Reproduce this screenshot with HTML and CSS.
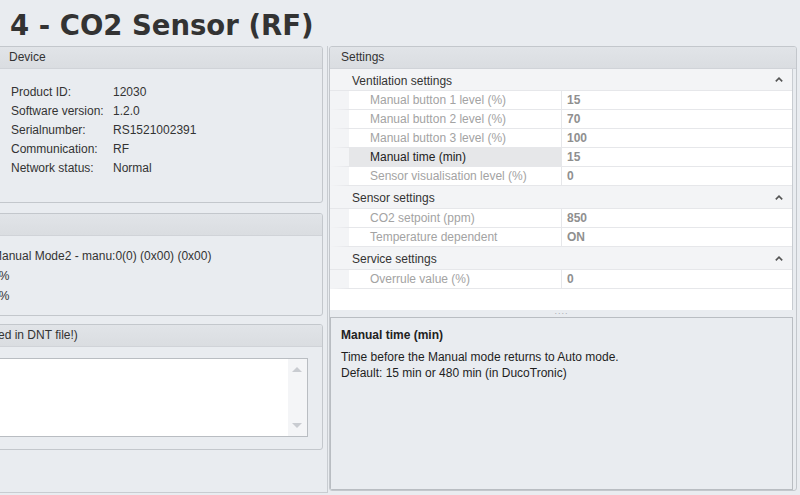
FILE: index.html
```html
<!DOCTYPE html>
<html>
<head>
<meta charset="utf-8">
<link rel="stylesheet" href="styles.css">
</head>
<body>
<div class="page">
  <h1 class="title">4 - CO2 Sensor (RF)</h1>
  <div class="main">
    <div class="left">
      <div class="group device">
        <div class="group-head">Device</div>
        <div class="device-body">
          <div class="kv"><span class="k">Product ID:</span><span>12030</span></div>
          <div class="kv"><span class="k">Software version:</span><span>1.2.0</span></div>
          <div class="kv"><span class="k">Serialnumber:</span><span>RS1521002391</span></div>
          <div class="kv"><span class="k">Communication:</span><span>RF</span></div>
          <div class="kv"><span class="k">Network status:</span><span>Normal</span></div>
        </div>
      </div>
      <div class="group status">
        <div class="group-head">&nbsp;</div>
        <div class="status-body">
          <div class="line">Manual Mode2 - manu:0(0) (0x00) (0x00)</div>
          <div class="line">0%</div>
          <div class="line">0%</div>
        </div>
      </div>
      <div class="group notes">
        <div class="group-head head-clip">(not stored in DNT file!)</div>
        <div class="notes-body">
          <div class="textbox">
            <div class="scroll">
              <span class="arr up"></span>
              <span class="arr down"></span>
            </div>
          </div>
        </div>
      </div>
    </div>
    <div class="right">
      <div class="group settings">
        <div class="group-head">Settings</div>
        <div class="settings-body">
          <div class="grid">
            <div class="cat first"><span>Ventilation settings</span><svg class="chev" width="8" height="5" viewBox="0 0 8 5"><polyline points="0.8,4.4 4,1.2 7.2,4.4" fill="none" stroke="#555" stroke-width="1.6"/></svg></div>
            <div class="row"><span class="lbl">Manual button 1 level (%)</span><span class="val">15</span></div>
            <div class="row"><span class="lbl">Manual button 2 level (%)</span><span class="val">70</span></div>
            <div class="row"><span class="lbl">Manual button 3 level (%)</span><span class="val">100</span></div>
            <div class="row sel"><span class="lbl">Manual time (min)</span><span class="val">15</span></div>
            <div class="row"><span class="lbl">Sensor visualisation level (%)</span><span class="val">0</span></div>
            <div class="cat"><span>Sensor settings</span><svg class="chev" width="8" height="5" viewBox="0 0 8 5"><polyline points="0.8,4.4 4,1.2 7.2,4.4" fill="none" stroke="#555" stroke-width="1.6"/></svg></div>
            <div class="row"><span class="lbl">CO2 setpoint (ppm)</span><span class="val">850</span></div>
            <div class="row"><span class="lbl">Temperature dependent</span><span class="val">ON</span></div>
            <div class="cat"><span>Service settings</span><svg class="chev" width="8" height="5" viewBox="0 0 8 5"><polyline points="0.8,4.4 4,1.2 7.2,4.4" fill="none" stroke="#555" stroke-width="1.6"/></svg></div>
            <div class="row"><span class="lbl">Overrule value (%)</span><span class="val">0</span></div>
            <div class="grid-fill"></div>
          </div>
          <div class="splitter">....</div>
          <div class="desc">
            <div class="desc-title">Manual time (min)</div>
            <div class="desc-text">Time before the Manual mode returns to Auto mode.<br>Default: 15 min or 480 min (in DucoTronic)</div>
          </div>
        </div>
      </div>
    </div>
  </div>
</div>
</body>
</html>
```

FILE: styles.css
```css
* { box-sizing: border-box; }
html, body { margin: 0; padding: 0; }
body {
  width: 800px;
  height: 495px;
  overflow: hidden;
  background: #e9ecf0;
  font-family: "Liberation Sans", Arial, sans-serif;
  font-size: 12px;
  color: #1e1e1e;
}
.page { width: 800px; height: 495px; display: flex; flex-direction: column; }
.title {
  margin: 0;
  height: 46px;
  padding: 5px 0 0 10px;
  font-family: "DejaVu Sans", sans-serif;
  font-weight: bold;
  font-size: 27.5px;
  line-height: 40px;
  color: #333;
}
.main { display: flex; flex: 1; min-height: 0; }
.left {
  width: 328px;
  flex: none;
  border-right: 1px solid #c8ccd1;
  border-bottom: 1px solid #c8ccd1;
  height: 447px;
  overflow: hidden;
  display: flex;
  flex-direction: column;
}
.group {
  border: 1px solid #c3c7cc;
  border-radius: 3px;
  background: #e9ecf0;
  overflow: hidden;
}
.left .group { margin-left: -6px; width: 329px; flex: none; }
.group-head {
  height: 22px;
  line-height: 21px;
  padding-left: 14px;
  background: linear-gradient(#e1e4e8, #dadde1);
  border-bottom: 1px solid #d0d3d8;
  color: #333;
}
.device { height: 157px; }
.device-body { padding: 14px 0 0 16px; }
.kv { display: flex; height: 19px; line-height: 19px; color: #333; }
.kv .k { width: 102px; }
.status { height: 103px; margin-top: 10px; }
.status-body { padding: 10px 0 0 0; margin-left: -3px; }
.status-body .line { height: 20px; line-height: 20px; color: #333; }
.notes { height: 126px; margin-top: 8px; }
.head-clip { padding-left: 0; margin-left: -41px; }
.notes-body { padding: 11px 14px 0 0; }
.textbox {
  height: 79px;
  margin-left: -4px;
  background: #fff;
  border: 1px solid #b9bdc2;
  display: flex;
  justify-content: flex-end;
}
.scroll {
  width: 19px;
  background: #f4f5f7;
  position: relative;
}
.arr {
  position: absolute;
  left: 4px;
  width: 0; height: 0;
  border-left: 5px solid transparent;
  border-right: 5px solid transparent;
}
.arr.up { top: 8px; border-bottom: 5px solid #c9ccd1; }
.arr.down { bottom: 8px; border-top: 5px solid #c9ccd1; }

.right { flex: 1; padding-left: 1px; padding-right: 3px; }
.settings { height: 445px; display: flex; flex-direction: column; border-radius: 3px; }
.settings .group-head { padding-left: 11px; }
.settings-body { flex: 1; display: flex; flex-direction: column; padding-right: 3px; }
.grid {
  height: 241px;
  background: #fff;
  border-right: 1px solid #c8ccd1;
  display: flex;
  flex-direction: column;
}
.cat {
  flex: none;
  height: 23px;
  padding: 2px 9px 0 22px;
  background: #f3f4f6;
  border-bottom: 1px solid #e6e7ea;
  display: flex;
  justify-content: space-between;
  align-items: center;
  color: #333;
}
.cat.first { height: 22px; padding-top: 2px; }
.chev { flex: none; margin-top: -2px; }
.row {
  flex: none;
  height: 19px;
  line-height: 18px;
  display: flex;
  border-left: 19px solid #f3f4f6;
  border-bottom: 1px solid #e6e7ea;
}
.lbl {
  width: 213px;
  padding-left: 21px;
  color: #a3a3a3;
  border-right: 1px solid #e6e7ea;
}
.row.sel .lbl { background: #e6e7e9; color: #222; }
.val { padding-left: 5px; font-weight: bold; color: #8f8f8f; }
.grid-fill { flex: 1; }
.splitter {
  height: 7px;
  line-height: 2px;
  text-align: center;
  color: #a9adb3;
  font-size: 9px;
  letter-spacing: 1px;
}
.desc {
  flex: 1;
  border: 1px solid #b9bdc2;
  padding: 8px 10px;
  background: #e9ecf0;
  color: #1e1e1e;
}
.desc-title { font-weight: bold; height: 23px; line-height: 18px; color: #222; }
.desc-text { line-height: 16px; }
```
